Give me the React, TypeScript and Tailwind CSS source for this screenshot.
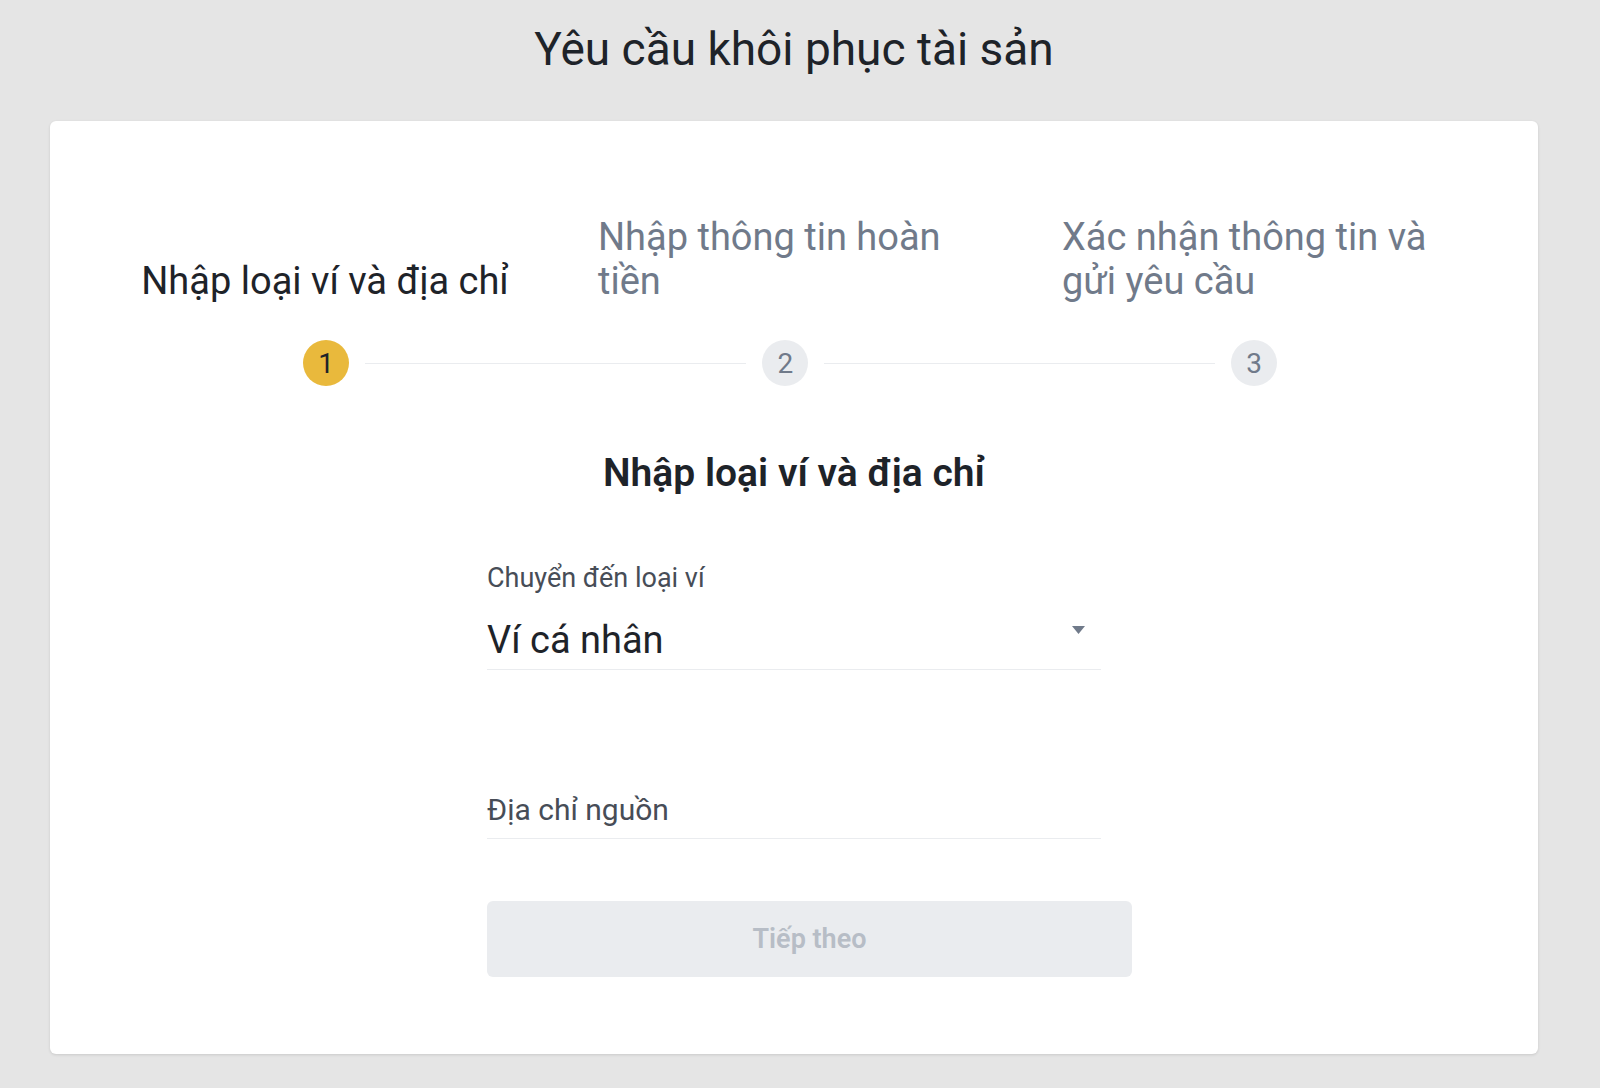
const steps = [
  { n: 1, label: "Nhập loại ví và địa chỉ", active: true },
  { n: 2, label: "Nhập thông tin hoàn tiền", active: false },
  { n: 3, label: "Xác nhận thông tin và gửi yêu cầu", active: false },
];

const StepCircle = ({ n, active }: { n: number; active: boolean }) => (
  <div
    className={
      active
        ? "flex size-[46px] shrink-0 items-center justify-center rounded-full bg-[#e9b93c] pt-[2px] text-[28px] text-[#1e2329]"
        : "flex size-[46px] shrink-0 items-center justify-center rounded-full bg-[#eaecef] pt-[2px] text-[28px] text-[#707a8a]"
    }
  >
    {n}
  </div>
);

export default function App() {
  return (
    <div className="min-h-screen bg-[#e5e5e5] pl-[50px] pr-[62px] pb-[35px] font-['Roboto',sans-serif]">
      <h1 className="flex h-[121px] items-center justify-center pb-[24px] text-[46px] leading-[52px] font-normal text-[#1e2329]">
        Yêu cầu khôi phục tài sản
      </h1>

      <div className="rounded-md bg-white pt-[94px] pb-[77px] pl-[43px] shadow-[0_1px_3px_rgba(0,0,0,0.12)]">
        <div className="w-[1392px]">
          <div className="grid grid-cols-3 items-end">
            {steps.map((s) => (
              <div key={s.n} className="flex justify-center">
                <div
                  className={
                    s.active
                      ? "max-w-[382px] text-left text-[38px] leading-[44px] text-[#1e2329]"
                      : "max-w-[382px] text-left text-[38px] leading-[44px] text-[#707a8a]"
                  }
                >
                  {s.label}
                </div>
              </div>
            ))}
          </div>

          <div className="mt-[37px] flex items-center pl-[210px] pr-[208px]">
            <StepCircle n={1} active />
            <div className="mx-4 h-px flex-[375] bg-[#eaecef]" />
            <StepCircle n={2} active={false} />
            <div className="mx-4 h-px flex-[384] bg-[#eaecef]" />
            <StepCircle n={3} active={false} />
          </div>
        </div>

        <h2 className="mt-[65px] -ml-[43px] text-center text-[39px] leading-[44px] font-semibold text-[#1e2329]">
          Nhập loại ví và địa chỉ
        </h2>

        <div className="mt-[68px] ml-[394px] w-[645px]">
          <div className="w-[614px]">
            <label className="block text-[27px] leading-[30px] text-[#474d57]">
              Chuyển đến loại ví
            </label>
            <div className="mt-[27px] flex items-center justify-between border-b border-[#eaecef] pb-[9px]">
              <span className="text-[38px] leading-[40px] text-[#1e2329]">Ví cá nhân</span>
              <svg width="13" height="8" viewBox="0 0 13 8" className="mr-[16px] mb-[20px]">
                <path d="M0 0h13L6.5 8z" fill="#707a8a" />
              </svg>
            </div>
          </div>

          <div className="mt-[122px] w-[614px] border-b border-[#eaecef] pb-[10px]">
            <span className="text-[30px] leading-[36px] text-[#474d57]">Địa chỉ nguồn</span>
          </div>

          <button
            type="button"
            disabled
            className="mt-[62px] flex h-[76px] w-[645px] items-center justify-center rounded-md bg-[#eaecef] text-[27px] font-semibold text-[#b7bdc6]"
          >
            Tiếp theo
          </button>
        </div>
      </div>
    </div>
  );
}
